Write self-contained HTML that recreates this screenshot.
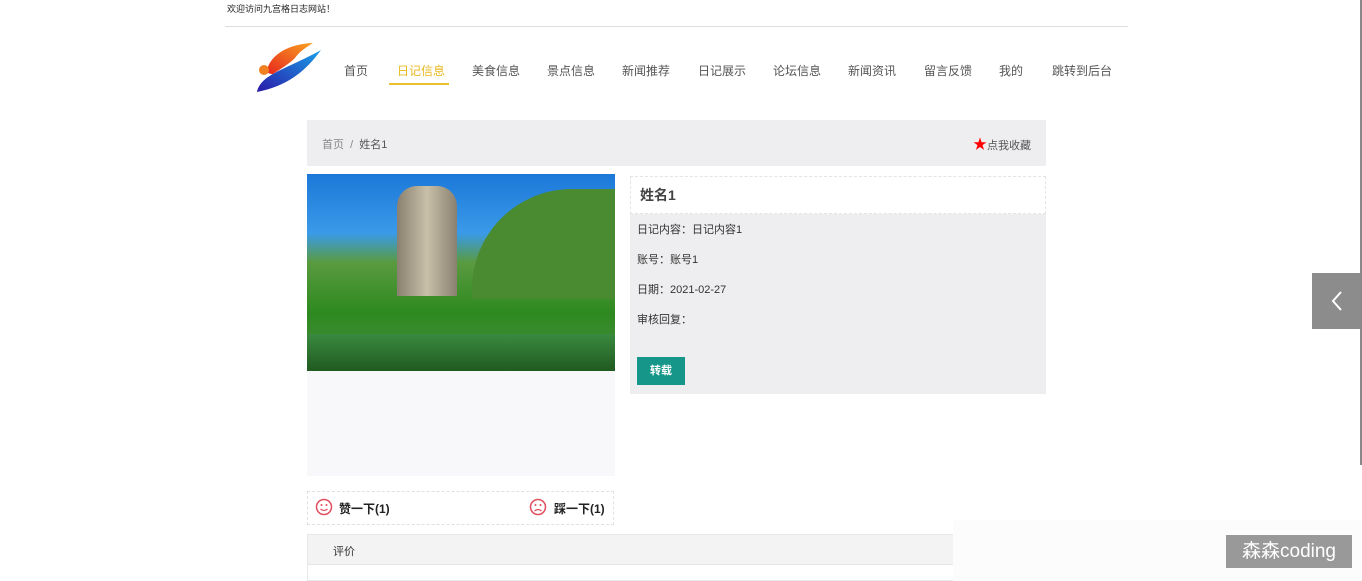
<!DOCTYPE html>
<html><head><meta charset="utf-8"><style>
*{margin:0;padding:0;box-sizing:border-box}
body{width:1362px;height:581px;overflow:hidden;background:#fff;position:relative;font-family:"Liberation Sans","Noto Sans CJK SC",sans-serif;color:#333}
.a{position:absolute}
.nav{font-size:12px;color:#555;top:62px}
</style></head><body>
<div class="a" style="left:227px;top:2px;font-size:9px;color:#222">欢迎访问九宫格日志网站！</div>
<div class="a" style="left:225px;top:26px;width:903px;height:1px;background:#ddd"></div>
<svg class="a" style="left:255px;top:40px" width="70" height="54" viewBox="0 0 70 54">
<defs><linearGradient id="b" x1="0" y1="1" x2="1" y2="0"><stop offset="0" stop-color="#2a1aa8"/><stop offset="1" stop-color="#18a0e8"/></linearGradient>
<linearGradient id="r" x1="0" y1="1" x2="1" y2="0"><stop offset="0" stop-color="#e8281e"/><stop offset="1" stop-color="#f8a020"/></linearGradient></defs>
<path d="M2 52 C6 34 30 30 66 10 C50 32 32 46 2 52Z" fill="url(#b)"/>
<path d="M12 30 C16 14 34 4 58 3 C50 8 44 12 40 18 C34 24 24 30 18 34 C14 34 12 33 12 30Z" fill="url(#r)"/>
<circle cx="9" cy="30" r="5" fill="#f08020"/>
</svg>
<div class="a nav" style="left:344px">首页</div>
<div class="a nav" style="left:397px;color:#e8b820">日记信息</div>
<div class="a" style="left:389px;top:83px;width:60px;height:2px;background:#e8c030"></div>
<div class="a nav" style="left:472px">美食信息</div>
<div class="a nav" style="left:547px">景点信息</div>
<div class="a nav" style="left:622px">新闻推荐</div>
<div class="a nav" style="left:698px">日记展示</div>
<div class="a nav" style="left:773px">论坛信息</div>
<div class="a nav" style="left:848px">新闻资讯</div>
<div class="a nav" style="left:924px">留言反馈</div>
<div class="a nav" style="left:999px">我的</div>
<div class="a nav" style="left:1052px">跳转到后台</div>

<div class="a" style="left:307px;top:120px;width:739px;height:46px;background:#eeeef0"></div>
<div class="a" style="left:322px;top:136px;font-size:11px;color:#888">首页 &nbsp;/ &nbsp;<span style="color:#555">姓名1</span></div>
<div class="a" style="left:973px;top:134px;font-size:11px;color:#555"><span style="color:#f00;font-size:14px">★</span>点我收藏</div>

<div class="a" style="left:307px;top:174px;width:308px;height:197px;overflow:hidden;background:linear-gradient(#1c78d8 0%,#3a9ae8 30%,#5a9a40 45%,#2e8a20 70%,#3a8a30 84%,#2a6a30 100%)">
<div class="a" style="left:90px;top:12px;width:60px;height:110px;background:linear-gradient(90deg,#8a8070,#c8c0a8,#8a8070);border-radius:20px 20px 0 0"></div>
<div class="a" style="left:165px;top:15px;width:150px;height:110px;background:#4a8a30;border-radius:100px 0 0 0"></div>
<div class="a" style="left:0;top:160px;width:308px;height:37px;background:linear-gradient(#3a8a40,#205a20)"></div>
</div>
<div class="a" style="left:307px;top:371px;width:308px;height:105px;background:#f8f7fa"></div>
<div class="a" style="left:307px;top:491px;width:307px;height:34px;border:1px dashed #e0e0e0"></div>
<svg class="a" style="left:315px;top:498px" width="18" height="18"><circle cx="9" cy="9" r="7.5" fill="none" stroke="#e05060" stroke-width="1.5"/><circle cx="6.5" cy="7" r="1" fill="#e05060"/><circle cx="11.5" cy="7" r="1" fill="#e05060"/><path d="M5.5 11 Q9 14 12.5 11" fill="none" stroke="#e05060" stroke-width="1.2"/></svg>
<div class="a" style="left:339px;top:500px;font-size:12px;font-weight:bold;color:#222">赞一下(1)</div>
<svg class="a" style="left:529px;top:498px" width="18" height="18"><circle cx="9" cy="9" r="7.5" fill="none" stroke="#e05060" stroke-width="1.5"/><circle cx="6.5" cy="7" r="1" fill="#e05060"/><circle cx="11.5" cy="7" r="1" fill="#e05060"/><path d="M5.5 13 Q9 10 12.5 13" fill="none" stroke="#e05060" stroke-width="1.2"/></svg>
<div class="a" style="left:554px;top:500px;font-size:12px;font-weight:bold;color:#222">踩一下(1)</div>

<div class="a" style="left:630px;top:176px;width:416px;height:38px;border:1px dashed #e4e4e4"></div>
<div class="a" style="left:640px;top:185px;font-size:14px;font-weight:bold;color:#444">姓名1</div>
<div class="a" style="left:630px;top:214px;width:416px;height:180px;background:#eeeef0"></div>
<div class="a" style="left:637px;top:215px;font-size:11px;color:#333;line-height:30px">日记内容：日记内容1<br>账号：账号1<br>日期：2021-02-27<br>审核回复：</div>
<div class="a" style="left:637px;top:357px;width:48px;height:28px;background:#159688;color:#fff;font-size:11px;font-weight:bold;text-align:center;line-height:28px">转载</div>

<div class="a" style="left:307px;top:534px;width:739px;height:47px;border:1px solid #e8e8e8;background:#fff"></div>
<div class="a" style="left:308px;top:535px;width:737px;height:30px;background:#f3f3f3;border-bottom:1px solid #e6e6e6"></div>
<div class="a" style="left:333px;top:543px;font-size:11px;color:#333">评价</div>

<div class="a" style="left:953px;top:520px;width:409px;height:61px;background:#fcfcfc"></div>
<div class="a" style="left:1226px;top:535px;width:126px;height:33px;background:#999;color:#fff;font-size:19px;line-height:33px;text-align:center">森森coding</div>
<div class="a" style="left:1312px;top:273px;width:50px;height:56px;background:#8c8c8c"></div>
<svg class="a" style="left:1330px;top:290px" width="14" height="22"><path d="M11 2 L3 11 L11 20" fill="none" stroke="#fff" stroke-width="2"/></svg>
<div class="a" style="left:1360px;top:0;width:2px;height:465px;background:#888"></div>
</body></html>
